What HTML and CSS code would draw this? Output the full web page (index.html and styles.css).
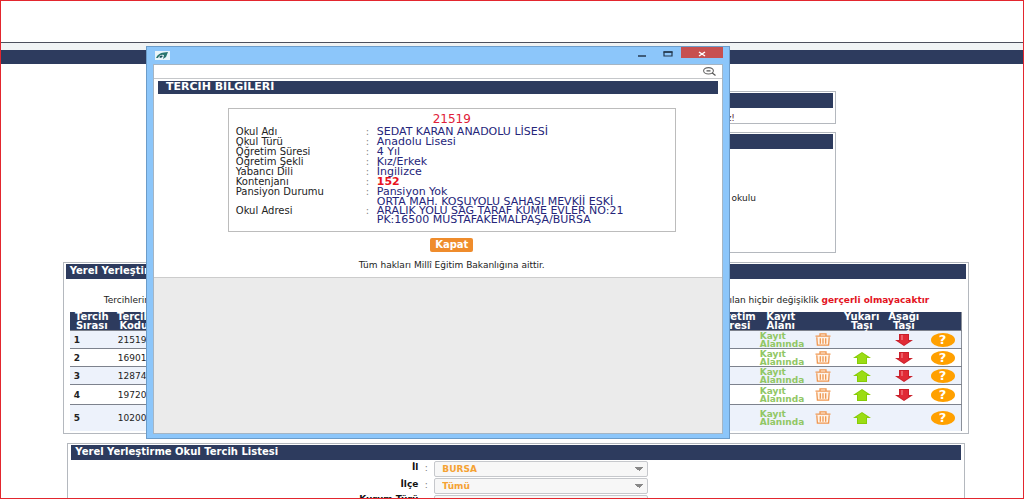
FILE: index.html
```html
<!DOCTYPE html>
<html lang="tr">
<head>
<meta charset="utf-8">
<title>Tercih Bilgileri</title>
<link rel="stylesheet" href="styles.css">
</head>
<body>
<svg class="sprite" aria-hidden="true">
  <symbol id="trash" viewBox="0 0 16 13" preserveAspectRatio="none">
    <path d="M.5 3.200h15M5 3V.8h6V3M1.800 4.200l.6 8h11.200l.6-8" fill="#fff4e8" stroke="#ef9650" stroke-width="1.300"/>
    <path d="M5.300 5.300v5.400M8 5.300v5.400M10.700 5.300v5.400" stroke="#ef9650" stroke-width="1.300"/>
  </symbol>
  <symbol id="up" viewBox="0 0 18 12" preserveAspectRatio="none">
    <path d="M9 0L18 6H14V12H4V6H0Z" fill="#86cc08"/>
    <path d="M9 1L15 5.200H13V11H5V5.200H3Z" fill="#9bdc14"/>
  </symbol>
  <symbol id="down" viewBox="0 0 18 12" preserveAspectRatio="none">
    <path d="M4 0H14V6H18L9 12L0 6H4Z" fill="#c9202b"/>
    <path d="M5 1H13V7H15L9 11L3 7H5Z" fill="#e02b36"/>
    <path d="M6 1H8V6H6Z" fill="#ec6068"/>
  </symbol>
</svg>
<div class="page">
  <header class="topbar"><div class="strip"></div><div class="nav"></div></header>

  <main>
    <section class="panel narrow">
      <h2 class="bar"></h2>
      <p class="status">niz!</p>
    </section>
    <section class="panel narrow school">
      <h2 class="bar"></h2>
      <p class="grade">okulu</p>
    </section>

    <section class="panel wide">
      <h2 class="bar">Yerel Yerleştirme</h2>
      <p class="note"><span>Tercihleriniz</span><span>yapılan hiçbir değişiklik <b>gerçerli olmayacaktır</b></span></p>
      <table class="choices">
        <colgroup><col class="c-order"><col class="c-code"><col><col class="c-time"><col class="c-field"><col class="c-trash"><col class="c-up"><col class="c-down"><col class="c-help"></colgroup>
        <thead><tr><th>Tercih Sırası</th><th>Tercih Kodu</th><th></th><th>Öğretim Süresi</th><th>Kayıt Alanı</th><th></th><th>Yukarı Taşı</th><th>Aşağı Taşı</th><th></th></tr></thead>
        <tbody>
          <tr><td class="no">1</td><td class="code">21519</td><td></td><td></td><td class="area">Kayıt Alanında</td><td><button aria-label="Sil"><svg class="trash"><use href="#trash"/></svg></button></td><td></td><td><button aria-label="Aşağı taşı"><svg class="arrow"><use href="#down"/></svg></button></td><td><button class="help">?</button></td></tr>
          <tr><td class="no">2</td><td class="code">16901</td><td></td><td></td><td class="area">Kayıt Alanında</td><td><button aria-label="Sil"><svg class="trash"><use href="#trash"/></svg></button></td><td><button aria-label="Yukarı taşı"><svg class="arrow"><use href="#up"/></svg></button></td><td><button aria-label="Aşağı taşı"><svg class="arrow"><use href="#down"/></svg></button></td><td><button class="help">?</button></td></tr>
          <tr><td class="no">3</td><td class="code">12874</td><td></td><td></td><td class="area">Kayıt Alanında</td><td><button aria-label="Sil"><svg class="trash"><use href="#trash"/></svg></button></td><td><button aria-label="Yukarı taşı"><svg class="arrow"><use href="#up"/></svg></button></td><td><button aria-label="Aşağı taşı"><svg class="arrow"><use href="#down"/></svg></button></td><td><button class="help">?</button></td></tr>
          <tr class="mid"><td class="no">4</td><td class="code">19720</td><td></td><td></td><td class="area">Kayıt Alanında</td><td><button aria-label="Sil"><svg class="trash"><use href="#trash"/></svg></button></td><td><button aria-label="Yukarı taşı"><svg class="arrow"><use href="#up"/></svg></button></td><td><button aria-label="Aşağı taşı"><svg class="arrow"><use href="#down"/></svg></button></td><td><button class="help">?</button></td></tr>
          <tr class="tall"><td class="no">5</td><td class="code">10200</td><td></td><td></td><td class="area">Kayıt Alanında</td><td><button aria-label="Sil"><svg class="trash"><use href="#trash"/></svg></button></td><td><button aria-label="Yukarı taşı"><svg class="arrow"><use href="#up"/></svg></button></td><td></td><td><button class="help">?</button></td></tr>
        </tbody>
      </table>
    </section>

    <section class="panel list">
      <h2 class="bar">Yerel Yerleştirme Okul Tercih Listesi</h2>
      <form class="filters">
        <label for="il">İl</label><i>:</i><select id="il"><option>BURSA</option></select>
        <label for="ilce">İlçe</label><i>:</i><select id="ilce"><option>Tümü</option></select>
        <label class="last" for="tur">Kurum Türü</label><i>:</i><select id="tur"><option>Tümü</option></select>
      </form>
    </section>
  </main>

  <div class="window" role="dialog" aria-labelledby="dlg-title">
    <div class="titlebar">
      <svg class="logo" viewBox="0 0 15 9"><path d="M0 0h15v9H0z" fill="#e9f5fa"/><path d="M1 7Q3 2 9 1.500L13 1L11 6L8 8L9 4Q5 3 3 7Z" fill="#28756e"/><path d="M4 6Q6 3.500 8 5L6 7Z" fill="#164d58"/></svg>
      <div class="controls">
        <button aria-label="Küçült"><svg viewBox="0 0 10 8"><path d="M1 6h8" stroke="#24394f" stroke-width="1.500"/></svg></button>
        <button aria-label="Büyüt"><svg viewBox="0 0 10 8"><path d="M1 2h8v4H1z" fill="none" stroke="#24394f" stroke-width="1.200"/><path d="M.5 2h9" stroke="#24394f" stroke-width="1.600"/></svg></button>
        <button class="close" aria-label="Kapat"><svg viewBox="0 0 10 8"><path d="M2 2l6 4M8 2L2 6" stroke="#fff" stroke-width="1.500"/></svg></button>
      </div>
    </div>
    <div class="client">
      <div class="address"><svg viewBox="0 0 13 9"><ellipse cx="5.500" cy="3.800" rx="4.900" ry="3.200" fill="none" stroke="#666" stroke-width="1.100"/><path d="M3.500 3.800h4M9 5.800l3.500 2.700" stroke="#555" stroke-width="1.200"/></svg></div>
      <div class="content">
        <h1 class="bar" id="dlg-title">TERCİH BİLGİLERİ</h1>
        <div class="details">
          <div class="card">
            <p class="schoolcode">21519</p>
            <dl>
              <div><dt>Okul Adı</dt><dd>SEDAT KARAN ANADOLU LİSESİ</dd></div>
              <div><dt>Okul Türü</dt><dd>Anadolu Lisesi</dd></div>
              <div><dt>Öğretim Süresi</dt><dd>4 Yıl</dd></div>
              <div><dt>Öğretim Şekli</dt><dd>Kız/Erkek</dd></div>
              <div><dt>Yabancı Dili</dt><dd>İngilizce</dd></div>
              <div><dt>Kontenjanı</dt><dd class="quota">152</dd></div>
              <div><dt>Pansiyon Durumu</dt><dd>Pansiyon Yok</dd></div>
              <div class="addr"><dt>Okul Adresi</dt><dd>ORTA MAH. KOŞUYOLU SAHASI MEVKİİ ESKİ<br>ARALIK YOLU SAĞ TARAF KÜME EVLER NO:21<br>PK:16500 MUSTAFAKEMALPAŞA/BURSA</dd></div>
            </dl>
          </div>
          <button class="dismiss">Kapat</button>
          <p class="rights">Tüm hakları Millî Eğitim Bakanlığına aittir.</p>
        </div>
      </div>
    </div>
  </div>
</div>
</body>
</html>
```
FILE: styles.css
```css
* { box-sizing: border-box; }
body, h1, h2, p, dl, dd { margin: 0; }
body { font-family: "DejaVu Sans", Verdana, sans-serif; font-size: 9px; color: #222; background: #fff; }
button { border: 0; padding: 0; margin: 0; background: none; font: inherit; display: block; }
svg { display: block; }
.sprite { position: absolute; width: 0; height: 0; }

.page { position: relative; height: 100vh; overflow: hidden; border: 1px solid #e3262e; }
.topbar { padding-top: 41px; }
.strip { height: 8px; border-top: 1px solid #4c4f5c; background: #f0f3f4; }
.nav { height: 14px; background: #2d3b5e; }
main { display: flex; flex-direction: column; align-items: center; padding-top: 27px; }

.panel { border: 1px solid #b4b8be; padding: 1px 2px 2px; background: #fff; }
.bar { height: 15px; line-height: 14px; padding-left: 4px; background: #2d3b5e; color: #fff; font-size: 10px; font-weight: bold; white-space: nowrap; }
.narrow { width: 63.400%; height: 33px; text-align: right; margin-bottom: 8px; }
.school { height: 121px; margin-bottom: 9px; }
.status { padding: 5px 98px 0 0; color: #603040; line-height: 10px; }
.grade { padding: 44px 77px 0 0; line-height: 11px; }

.wide { width: 88.700%; margin-left: 8px; margin-bottom: 9px; }
.note { display: flex; justify-content: space-between; padding: 16px 37px 6px 38px; line-height: 11px; }
.note b { color: #e3131e; }
.choices { width: calc(100% - 8px); margin-left: 4px; table-layout: fixed; border-collapse: collapse; border-right: 1px solid #8b909a; }
.choices th, .choices td { padding: 0; }
.choices th { height: 18px; background: #2d3b5e; color: #fff; font-size: 10px; line-height: 9px; }
.choices td { height: 18px; border-top: 1px solid #7d828d; }
.choices tbody tr:nth-child(odd) { background: #edf2fb; }
.choices .mid td { height: 20px; }
.choices .tall td { height: 26px; }
.c-order { width: 44px; }
.c-code { width: 40px; }
.c-time { width: 46px; }
.c-field { width: 50px; }
.c-trash { width: 34px; }
.c-up { width: 44px; }
.c-down { width: 40px; }
.c-help { width: 38px; }
.choices .no { padding-left: 4px; font-weight: bold; }
.choices .code { padding-left: 4px; }
.choices .area { padding-left: 4px; color: #91c765; line-height: 8px; font-weight: bold; }
.choices button { margin: 0 auto; }
.trash { width: 16px; height: 13px; }
.arrow { width: 18px; height: 12px; }
.choices .help { width: 24px; height: 14px; border-radius: 50%; background: #ffa000; color: #fff; font-size: 13px; line-height: 14px; font-weight: bold; }

.list { width: 87.800%; margin-left: 8px; padding: 1px 3px; }
.filters { display: grid; grid-template-columns: 347px 16px 214px; row-gap: 1px; padding-top: 1px; }
.filters label { text-align: right; font-weight: bold; line-height: 13px; color: #111; }
.filters .last { line-height: 9px; }
.filters i { font-style: normal; text-align: center; line-height: 14px; color: #777; }
.filters select { appearance: none; height: 16px; padding: 0 7px; border: 1px solid #c6c8cc; border-radius: 2px; background: linear-gradient(45deg, transparent 50%, #888 50%) right 8px center / 4px 4px no-repeat, linear-gradient(-45deg, transparent 50%, #888 50%) right 4px center / 4px 4px no-repeat, #f7f7f7; font: bold 9px "DejaVu Sans", sans-serif; color: #f5a233; }

/* Pop-up browser window */
.window { position: absolute; left: 145px; top: 45px; width: 57.100%; height: 79%; display: flex; flex-direction: column; padding: 0 6px 4px; border: 1px solid #6c9cc9; background: #8cc6fa; }
.titlebar { flex: none; display: flex; justify-content: space-between; height: 17px; padding-left: 2px; }
.logo { width: 15px; height: 9px; margin-top: 4px; }
.controls { display: flex; }
.controls button { width: 26px; height: 11px; }
.controls svg { width: 10px; height: 8px; margin: 2px auto 0; }
.controls .close { width: 42px; background: #c75050; }
.client { flex: 1; border: 1px solid #a5b5c4; background: #ebebeb; }
.address { display: flex; justify-content: flex-end; height: 14px; padding: 2px 6px; background: #fff; border-bottom: 1px solid #c5c7ca; }
.address svg { width: 13px; height: 9px; }
.content { padding: 2px 4px 6px; background: #fff; border-bottom: 1px solid #ccc; }
.content .bar { height: 13px; line-height: 12px; padding-left: 8px; font-size: 11px; }
.details { display: flex; flex-direction: column; align-items: center; padding: 14px 0 0 28px; }
.card { width: 448px; margin-bottom: 6px; padding: 5px 7px; border: 1px solid #bcbcbc; line-height: 10px; font-size: 10px; }
.schoolcode { padding-bottom: 2px; text-align: center; color: #df2038; font-size: 12px; line-height: 11px; }
.card dl > div { display: flex; align-items: center; }
.card dl > div::before { content: ":"; order: 1; width: 11px; color: #888; }
.card dt { width: 130px; }
.card dd { order: 2; color: #25257a; font-size: 11px; white-space: nowrap; }
.card .quota { color: #e8131e; font-weight: bold; }
.card .addr { line-height: 9px; padding-bottom: 2px; }
.dismiss { width: 43px; height: 14px; border-radius: 2px; background: #ef8c2c; color: #fff; font-size: 10px; font-weight: bold; line-height: 14px; }
.rights { margin-top: 8px; line-height: 11px; }
```
